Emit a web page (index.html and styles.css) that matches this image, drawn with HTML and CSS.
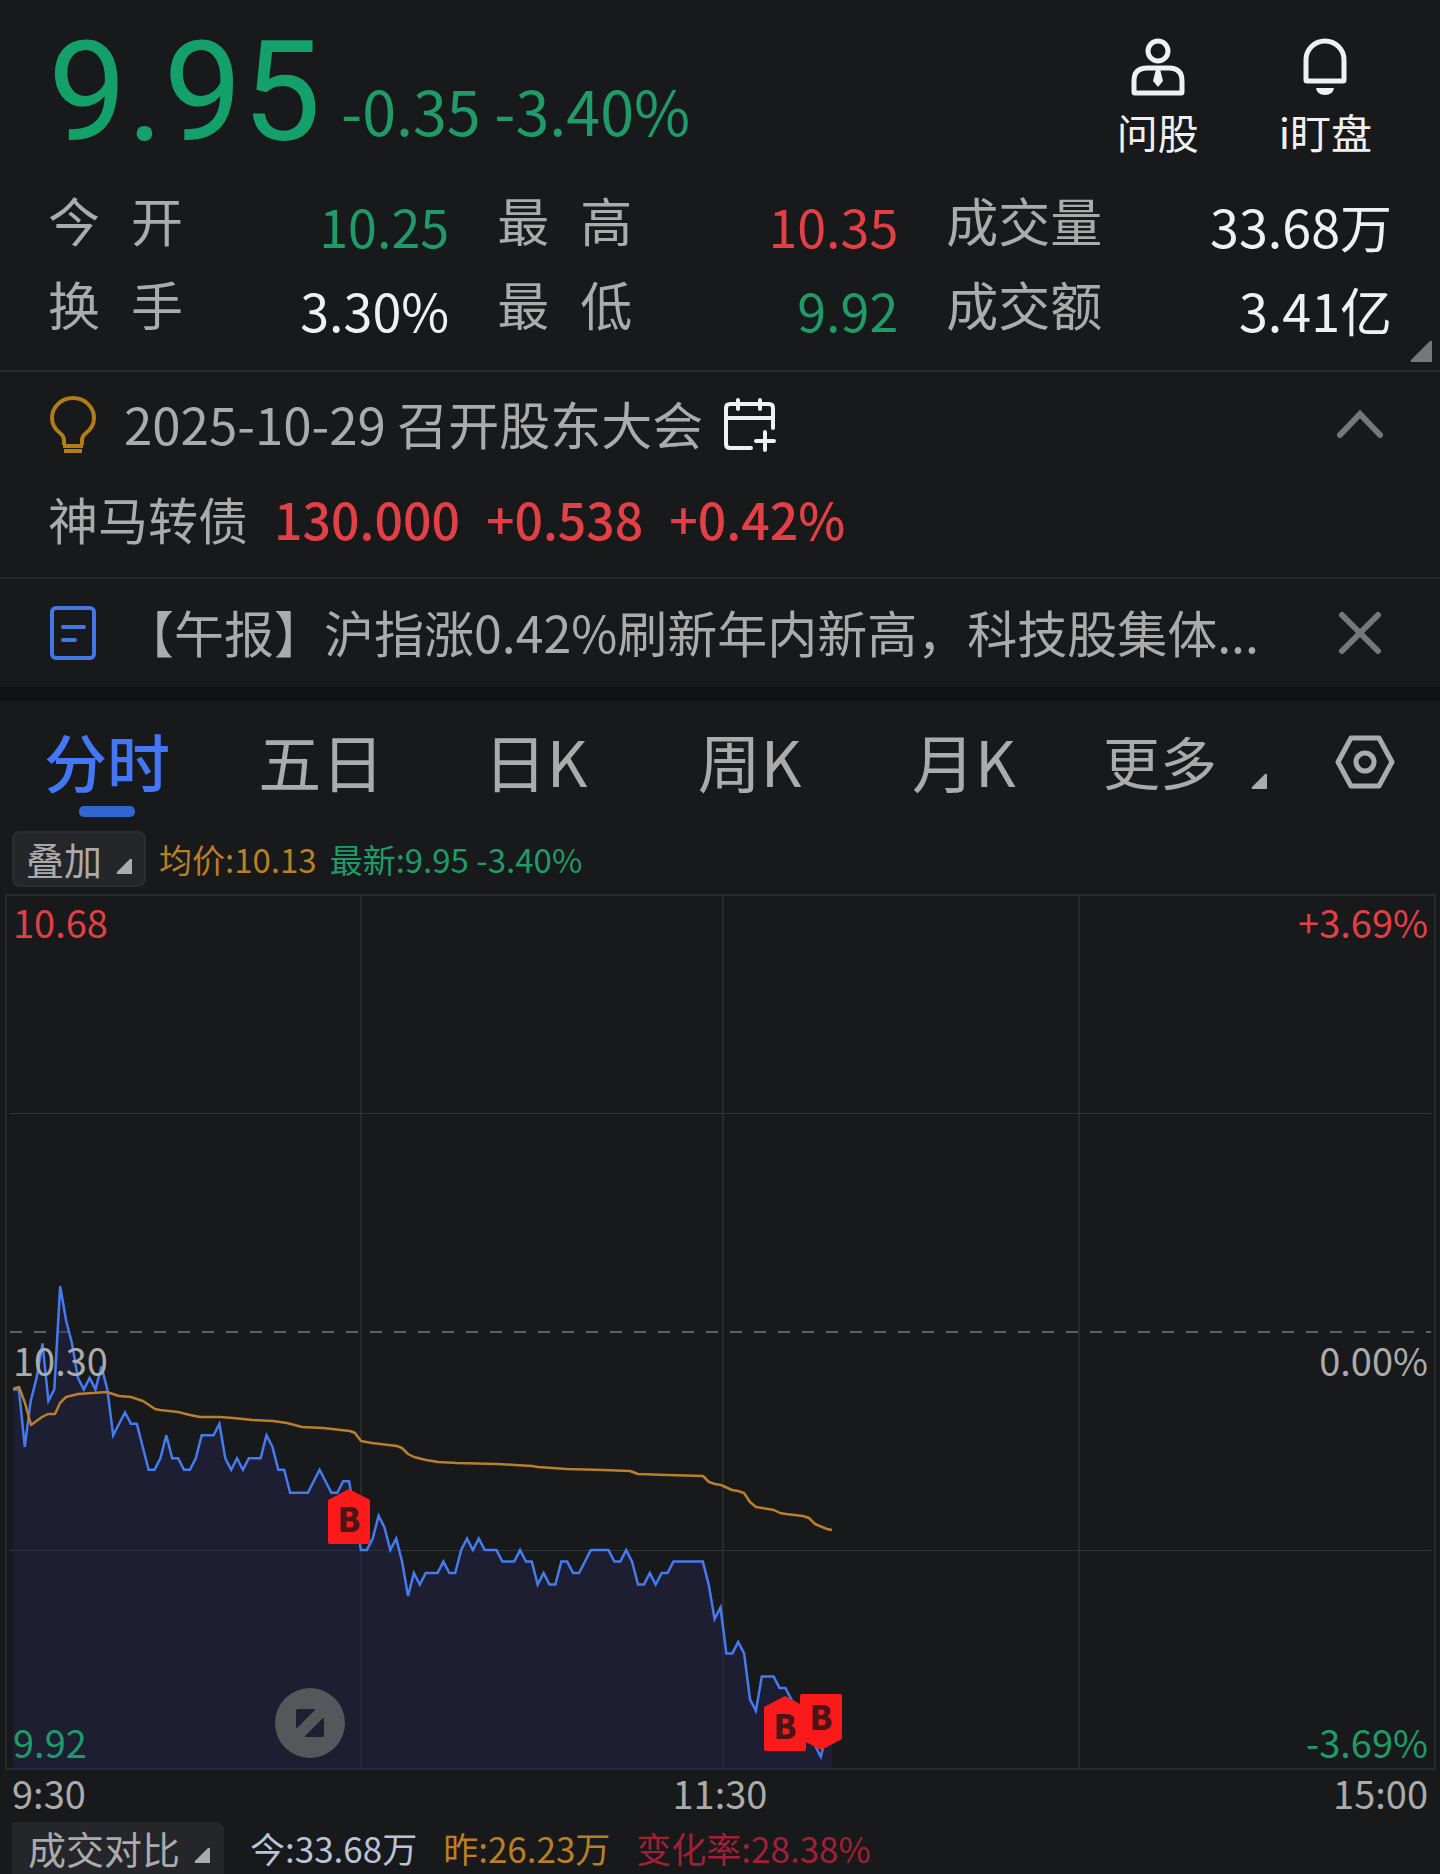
FILE: index.html
```html
<!DOCTYPE html>
<html lang="zh-CN">
<head>
  <meta charset="UTF-8" />
  <meta name="viewport" content="width=device-width, initial-scale=1.0" />
  <title>分时行情</title>
  <link rel="stylesheet" href="styles.css">
</head>
<body>
  <header class="quote">
    <div class="quote-top">
      <div class="price down">9.95</div>
      <div class="change down">-0.35 -3.40%</div>
      <div class="actions">
        <button class="action">
          <svg width="54" height="58" viewBox="0 0 54 58" fill="none" stroke="currentColor" stroke-width="5">
            <circle cx="27" cy="13" r="10" />
            <path d="M3 54V43Q3 30 16 30H38Q51 30 51 43V54Q51 55 50 55H4Q3 55 3 54Z" />
            <path d="M25 31H29L32 43L27 49L22 43Z" fill="currentColor" stroke="none" />
          </svg>
          问股
        </button>
        <button class="action">
          <svg width="44" height="58" viewBox="0 0 44 58" fill="none" stroke="currentColor" stroke-width="5">
            <path d="M3 42V22A19 19 0 0 1 41 22V42Q41 43 40 43H4Q3 43 3 42Z" />
            <path d="M13 50H31Q30 57 22 57Q14 57 13 50Z" fill="currentColor" stroke="none" />
          </svg>
          i盯盘
        </button>
      </div>
    </div>
    <dl class="stats">
      <div class="stat"><dt><span>今</span><span>开</span></dt><dd class="down">10.25</dd></div>
      <div class="stat"><dt><span>最</span><span>高</span></dt><dd class="up">10.35</dd></div>
      <div class="stat"><dt>成交量</dt><dd>33.68万</dd></div>
      <div class="stat"><dt><span>换</span><span>手</span></dt><dd>3.30%</dd></div>
      <div class="stat"><dt><span>最</span><span>低</span></dt><dd class="down">9.92</dd></div>
      <div class="stat"><dt>成交额</dt><dd>3.41亿</dd></div>
    </dl>
    <svg class="quote-corner" width="22" height="22" viewBox="0 0 22 22"><path d="M20 1Q22 0 22 2V22H2Q0 22 1 20Z" fill="#777" /></svg>
  </header>

  <section class="notice">
    <div class="notice-row">
      <svg class="lead-icon" width="50" height="58" viewBox="0 0 50 58" fill="none" stroke="#b27c17" stroke-width="4">
        <path d="M16 49V44Q16 40 12 37Q4 31 4 22A21 20 0 0 1 46 22Q46 31 38 37Q34 40 34 44V49" />
        <path d="M15 50H35M16 55H34" />
      </svg>
      <span class="notice-text event">2025-10-29 召开股东大会</span>
      <button class="icon-btn calendar" aria-label="添加日程">
        <svg width="54" height="56" viewBox="0 0 54 56" fill="none" stroke="#f0f0f0" stroke-width="4" stroke-linecap="round">
          <path d="M28 51H7Q3 51 3 47V11Q3 7 7 7H46Q50 7 50 11V31" />
          <path d="M3 21H50M15 3V12M37 3V12M42 35V53M33 44H51" />
        </svg>
      </button>
      <button class="icon-btn end" aria-label="收起">
        <svg width="48" height="48" viewBox="0 0 48 48" fill="none" stroke="#777" stroke-width="6" stroke-linecap="round"><path d="M4 34L24 13L44 34" /></svg>
      </button>
    </div>
    <div class="notice-row bond">
      <span class="notice-text">神马转债</span>
      <span class="notice-text up">130.000</span>
      <span class="notice-text up">+0.538</span>
      <span class="notice-text up">+0.42%</span>
    </div>
  </section>

  <section class="notice news">
    <div class="notice-row">
      <svg class="lead-icon" width="50" height="54" viewBox="0 0 50 54" fill="none" stroke="#4477e6" stroke-width="4">
        <rect x="4" y="2" width="42" height="50" rx="4" />
        <path d="M15 21H36M15 34H27" stroke-linecap="round" />
      </svg>
      <a class="notice-text" href="#">【午报】沪指涨0.42%刷新年内新高，科技股集体...</a>
      <button class="icon-btn end" aria-label="关闭">
        <svg width="48" height="48" viewBox="0 0 48 48" fill="none" stroke="#777" stroke-width="6" stroke-linecap="round"><path d="M6 6L42 42M42 6L6 42" /></svg>
      </button>
    </div>
  </section>

  <nav class="tabs">
    <button class="tab active">分时</button>
    <button class="tab">五日</button>
    <button class="tab">日K</button>
    <button class="tab">周K</button>
    <button class="tab">月K</button>
    <button class="tab more">更多 <svg width="16" height="16" viewBox="0 0 16 16"><path d="M14 1Q16 0 16 2V16H2Q0 16 1 14Z" fill="currentColor" /></svg></button>
    <button class="icon-btn settings" aria-label="设置">
      <svg width="60" height="54" viewBox="0 0 60 54" fill="none" stroke="#ababab" stroke-width="5">
        <path d="M16 3H44L57 27L44 51H16L3 27Z" stroke-linejoin="round" />
        <circle cx="30" cy="27" r="9" />
      </svg>
    </button>
  </nav>

  <main>
    <div class="legend">
      <button class="chip">叠加 <svg width="16" height="16" viewBox="0 0 16 16"><path d="M14 1Q16 0 16 2V16H2Q0 16 1 14Z" fill="currentColor" /></svg></button>
      <span class="avg">均价:10.13</span>
      <span class="down">最新:9.95 -3.40%</span>
    </div>

    <div class="chart">
      <svg class="plot" viewBox="0 0 1431 876" fill="none">
        <g stroke="#28292c" stroke-width="2">
          <rect x="1" y="1" width="1429" height="874" />
          <path d="M356 1V875M718 1V875M1074 1V875" />
        </g>
        <path d="M5 219.5H1426M5 656.5H1426" stroke="#333436" />
        <path d="M5 438H1426" stroke="#5c6069" stroke-width="2" stroke-dasharray="12 12" />
        <polygon id="priceArea" fill="#26264e" fill-opacity="0.45" />
        <polyline id="priceLine" stroke="#457bf0" stroke-width="2.5" />
        <polyline id="avgLine" stroke="#bb7f2b" stroke-width="2.5" stroke-linejoin="round" />
        <g class="marks">
          <path d="M323 606L344 595L365 606V648Q365 650 363 650H325Q323 650 323 648Z" />
          <text x="344" y="638">B</text>
          <path d="M759 813L780 802L801 813V855Q801 857 799 857H761Q759 857 759 855Z" />
          <text x="780" y="845">B</text>
          <path d="M795 802Q795 800 797 800H835Q837 800 837 802V845L816 856L795 845Z" />
          <text x="816" y="836">B</text>
        </g>
      </svg>
      <span class="label top left up">10.68</span>
      <span class="label top right up">+3.69%</span>
      <span class="label middle left">10.30</span>
      <span class="label middle right">0.00%</span>
      <span class="label bottom left down">9.92</span>
      <span class="label bottom right down">-3.69%</span>
      <button class="expand" aria-label="全屏">
        <svg width="28" height="28" viewBox="0 0 28 28" fill="#1e1f30"><path d="M2 0H18Q20 0 18 2L2 18Q0 20 0 18V2Q0 0 2 0ZM26 28H10Q8 28 10 26L26 10Q28 8 28 10V26Q28 28 26 28Z" /></svg>
      </button>
    </div>

    <div class="axis"><span>9:30</span><span>11:30</span><span>15:00</span></div>

    <div class="legend volume">
      <button class="chip">成交对比 <svg width="16" height="16" viewBox="0 0 16 16"><path d="M14 1Q16 0 16 2V16H2Q0 16 1 14Z" fill="currentColor" /></svg></button>
      <span class="today">今:33.68万</span>
      <span class="avg">昨:26.23万</span>
      <span class="rate">变化率:28.38%</span>
    </div>
  </main>

  <script src="script.js"></script>
</body>
</html>
```
FILE: styles.css
```css
* {
  box-sizing: border-box;
}
body {
  margin: 0;
  background: #17191a;
  color: #ababab;
  font-family: "Noto Sans CJK SC", sans-serif;
}
button {
  padding: 0;
  border: none;
  background: none;
  color: inherit;
  font: inherit;
  cursor: pointer;
}
svg {
  display: block;
  flex: none;
}
.up {
  color: #e34045;
}
.down {
  color: #1f9a69;
}
.avg {
  color: #bb7f22;
}

/* quote header */
.quote {
  position: relative;
  padding: 0 48px 22px;
  border-bottom: 2px solid #28292c;
}
.quote-top {
  display: flex;
  align-items: flex-end;
  height: 180px;
  padding-bottom: 6px;
}
.price {
  color: #14a06a;
  font-family: Roboto, sans-serif;
  font-size: 140px;
  line-height: 164px;
}
.change {
  margin-left: 20px;
  padding-bottom: 11px;
  font-size: 61px;
  line-height: 106px;
}
.actions {
  display: flex;
  align-self: flex-start;
  gap: 80px;
  margin-left: auto;
  padding: 38px 20px 0 0;
}
.action {
  display: flex;
  flex-direction: column;
  align-items: center;
  gap: 5px;
  color: #f0f0f0;
  font-size: 41px;
  line-height: 60px;
}
.stats {
  display: grid;
  grid-template-columns: 9fr 9fr 10fr;
  grid-auto-rows: 84px;
  column-gap: 48px;
  margin: 0;
}
.stat {
  display: flex;
  justify-content: space-between;
  align-items: flex-start;
}
.stat dt {
  display: flex;
  gap: 31px;
  font-size: 52px;
  line-height: 80px;
}
.stat dd {
  margin: 0;
  font-size: 52px;
  line-height: 92px;
}
.stat dd:not(.up):not(.down) {
  color: #f0f0f0;
}
.quote-corner {
  position: absolute;
  right: 8px;
  bottom: 8px;
}

/* notices */
.notice {
  padding: 0 48px 15px;
  border-bottom: 2px solid #28292c;
}
.notice-row {
  display: flex;
  align-items: center;
  height: 106px;
}
.lead-icon {
  margin-right: 26px;
}
.notice-text {
  padding-bottom: 5px;
  color: #ababab;
  font-size: 50px;
  line-height: 76px;
  white-space: nowrap;
  text-decoration: none;
}
.notice-text.event {
  font-size: 51px;
}
.notice-text.up {
  color: #e34045;
  font-weight: 500;
}
.icon-btn.calendar {
  margin-left: 20px;
}
.icon-btn.end {
  margin: 0 8px 0 auto;
}
.bond {
  gap: 26px;
  height: 84px;
}
.news {
  padding-bottom: 0;
  border-bottom: 14px solid #111214;
}
.news .notice-row {
  height: 108px;
}

/* period tabs */
.tabs {
  display: flex;
  align-items: center;
  height: 118px;
}
.tab {
  position: relative;
  flex: 1;
  height: 118px;
  font-size: 63px;
  line-height: 118px;
}
.tab.active {
  color: #4477f5;
  font-weight: 500;
}
.tab.active::after {
  content: "";
  position: absolute;
  left: 50%;
  bottom: 2px;
  width: 56px;
  height: 11px;
  margin-left: -28px;
  border-radius: 5px;
  background: #3067d0;
}
.tab.more {
  display: flex;
  flex: 0 0 224px;
  justify-content: flex-end;
  align-items: center;
  gap: 34px;
  padding-right: 28px;
  font-size: 57px;
}
.tab.more svg {
  margin-top: 42px;
}
.settings {
  padding: 4px 45px 0 40px;
}

/* chart */
.legend {
  display: flex;
  align-items: center;
  gap: 13px;
  padding: 12px 12px 7px;
  font-size: 33px;
  line-height: 54px;
}
.chip {
  display: flex;
  align-items: center;
  gap: 14px;
  height: 56px;
  padding: 0 12px;
  border: 2px solid #2c2d30;
  border-radius: 8px;
  background: #25262a;
  font-size: 38px;
  line-height: 52px;
}
.chip svg {
  margin-top: 14px;
}
.chart {
  position: relative;
  margin: 0 4px 0 5px;
}
.plot {
  width: 100%;
  height: auto;
}
.marks path {
  fill: #fb1a1a;
}
.marks text {
  fill: #4a1518;
  font-size: 33px;
  font-weight: 900;
  text-anchor: middle;
}
.label {
  position: absolute;
  font-size: 38px;
  line-height: 56px;
}
.left {
  left: 8px;
}
.right {
  right: 8px;
}
.top {
  top: 0;
}
.middle {
  top: 50%;
}
.bottom {
  bottom: 0;
}
.expand {
  position: absolute;
  left: 19%;
  bottom: 12px;
  display: flex;
  justify-content: center;
  align-items: center;
  width: 70px;
  height: 70px;
  margin-left: -2px;
  border-radius: 50%;
  background: #56575a;
}
.axis {
  display: grid;
  grid-template-columns: 1fr 1fr 1fr;
  padding: 0 12px;
  font-size: 38px;
  line-height: 45px;
}
.axis span:nth-child(2) {
  text-align: center;
}
.axis span:last-child {
  text-align: right;
}
.volume {
  height: 59px;
  padding: 7px 12px 0;
  gap: 26px;
  overflow: hidden;
  font-size: 35px;
}
.volume .chip {
  height: 52px;
  border: none;
  border-radius: 0 8px 0 0;
  padding: 0 14px 0 16px;
  line-height: 56px;
}
.today {
  color: #b9c3dc;
}
.rate {
  color: #a31f35;
}
```
FILE: script.js
```js
// one value per minute, in cents from yesterday's close (10.30)
const prices = [
  -5, -5, -10, -6, -4, -1, -6, -5, 4, 1, -1, -4, -5, -4, -5, -3, -5, -9, -8, -7,
  -8, -8, -10, -12, -12, -11, -9, -11, -11, -12, -12, -11, -9, -9, -9, -8, -11, -12, -11, -12,
  -11, -11, -11, -9, -10, -12, -12, -14, -14, -14, -14, -13, -12, -13, -14, -14, -13, -13, -16, -19,
  -19, -18, -16, -17, -19, -18, -20, -23, -21, -22, -21, -21, -21, -20, -21, -21, -19, -18, -19, -18,
  -19, -19, -19, -20, -20, -20, -19, -20, -20, -22, -21, -22, -22, -20, -20, -21, -21, -20, -19, -19,
  -19, -19, -20, -20, -19, -20, -22, -22, -21, -22, -21, -21, -20, -20, -20, -20, -20, -20, -22, -25,
  -24, -28, -28, -27, -28, -32, -33, -30, -30, -30, -31, -31, -32, -33, -34, -35, -36, -37, -35, -35
];

// average price, already in plot coordinates
const average = [
  [8, 495], [14, 493], [20, 509], [26, 531], [37, 523], [43, 520], [50, 520], [55, 509], [61, 503],
  [73, 500], [102, 498], [114, 502], [126, 503], [138, 507], [150, 515], [155, 516], [173, 518],
  [185, 521], [195, 523], [215, 523], [228, 524], [248, 526], [268, 527], [282, 529], [297, 533],
  [318, 534], [345, 537], [350, 539], [356, 547], [367, 549], [392, 552], [397, 554], [403, 560],
  [409, 563], [421, 566], [433, 568], [452, 569], [492, 570], [510, 571], [527, 572], [533, 573],
  [562, 575], [598, 576], [625, 577], [633, 580], [662, 581], [698, 582], [704, 588], [710, 590],
  [716, 591], [727, 596], [733, 597], [739, 599], [745, 608], [751, 613], [769, 616], [775, 619],
  [781, 620], [798, 622], [804, 624], [810, 630], [822, 635], [827, 636]
];

const startX = 8;
const stepX = 5.896;
const zeroY = 438;
const centY = 11.48;

const line = prices.map((p, i) => `${(startX + i * stepX).toFixed(1)},${(zeroY - p * centY).toFixed(1)}`);
const endX = startX + (prices.length - 1) * stepX;

document.getElementById("priceLine").setAttribute("points", line.join(" "));
document.getElementById("priceArea").setAttribute("points", `${startX},875 ${line.join(" ")} ${endX.toFixed(1)},875`);
document.getElementById("avgLine").setAttribute("points", average.join(" "));
```
